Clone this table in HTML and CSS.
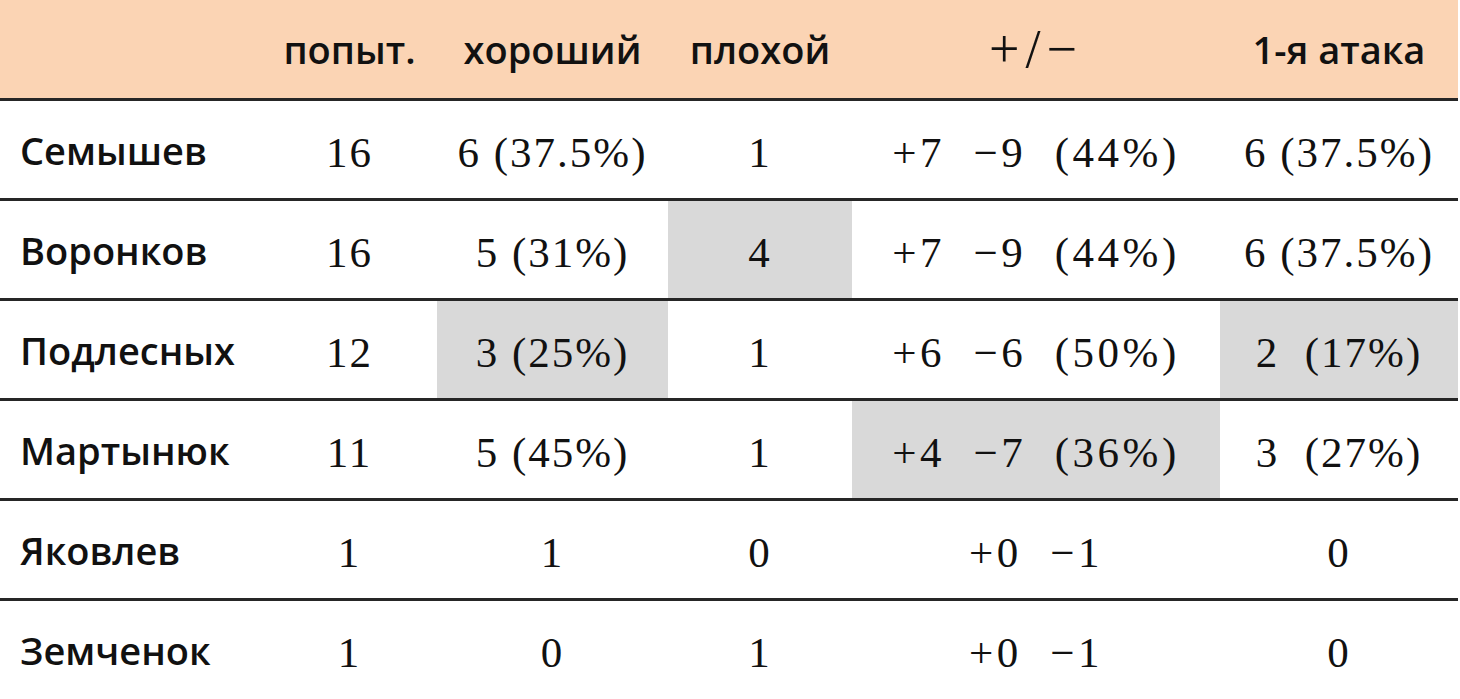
FILE: index.html
```html
<!DOCTYPE html>
<html lang="ru">
<head>
<meta charset="utf-8">
<title>Статистика</title>
<link rel="stylesheet" href="styles.css">
</head>
<body>
<div class="stats">
  <div class="row head">
    <div class="cell name"></div>
    <div class="cell">попыт.</div>
    <div class="cell">хороший</div>
    <div class="cell">плохой</div>
    <div class="cell pm">+/−</div>
    <div class="cell">1-я атака</div>
  </div>
  <div class="row">
    <div class="cell name">Семышев</div>
    <div class="cell num">16</div>
    <div class="cell num">6 (37.5%)</div>
    <div class="cell num">1</div>
    <div class="cell num wide">+7  −9  (44%)</div>
    <div class="cell num">6 (37.5%)</div>
  </div>
  <div class="row">
    <div class="cell name">Воронков</div>
    <div class="cell num">16</div>
    <div class="cell num">5 (31%)</div>
    <div class="cell num hl">4</div>
    <div class="cell num wide">+7  −9  (44%)</div>
    <div class="cell num">6 (37.5%)</div>
  </div>
  <div class="row">
    <div class="cell name">Подлесных</div>
    <div class="cell num">12</div>
    <div class="cell num hl">3 (25%)</div>
    <div class="cell num">1</div>
    <div class="cell num wide">+6  −6  (50%)</div>
    <div class="cell num hl">2  (17%)</div>
  </div>
  <div class="row">
    <div class="cell name">Мартынюк</div>
    <div class="cell num">11</div>
    <div class="cell num">5 (45%)</div>
    <div class="cell num">1</div>
    <div class="cell num wide hl">+4  −7  (36%)</div>
    <div class="cell num">3  (27%)</div>
  </div>
  <div class="row">
    <div class="cell name">Яковлев</div>
    <div class="cell num">1</div>
    <div class="cell num">1</div>
    <div class="cell num">0</div>
    <div class="cell num wide">+0  −1</div>
    <div class="cell num">0</div>
  </div>
  <div class="row last">
    <div class="cell name">Земченок</div>
    <div class="cell num">1</div>
    <div class="cell num">0</div>
    <div class="cell num">1</div>
    <div class="cell num wide">+0  −1</div>
    <div class="cell num">0</div>
  </div>
</div>
</body>
</html>
```
FILE: styles.css
```css
html, body {
  margin: 0;
  padding: 0;
  background: #ffffff;
}

.stats {
  width: 1458px;
  font-family: "Open Sans", "Noto Sans", sans-serif;
  color: #111111;
}

.row {
  display: grid;
  grid-template-columns: 262px 175px 231px 184px 368px 238px;
  height: 97px;
  border-bottom: 3px solid #262626;
}

.row.head {
  height: 98px;
  background: #fbd4b4;
  font-weight: 600;
  font-size: 38px;
}

.row.last {
  border-bottom: none;
}

.cell {
  display: flex;
  align-items: center;
  justify-content: center;
  white-space: pre;
}

.cell.name {
  justify-content: flex-start;
  padding-left: 20px;
  font-weight: 600;
  font-size: 38px;
}

.cell.num {
  font-family: "Liberation Serif", "Times New Roman", serif;
  font-size: 43px;
  letter-spacing: 2px;
  padding-top: 6px;
}

.cell.num.wide {
  letter-spacing: 3.5px;
}

.cell.pm {
  font-family: "Liberation Serif", "Times New Roman", serif;
  font-weight: 400;
  font-size: 54px;
  letter-spacing: 6px;
}

.cell.hl {
  background: #d9d9d9;
}
```
